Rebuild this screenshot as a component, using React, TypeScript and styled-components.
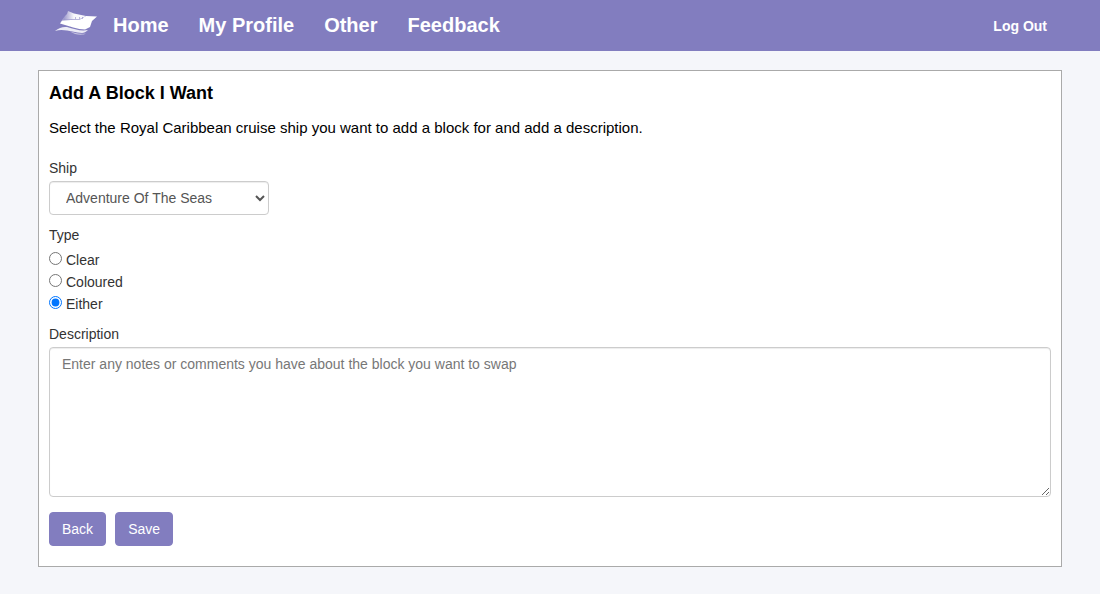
import React from "react";
import styled, { createGlobalStyle } from "styled-components";

const purple = "#827dbf";

const GlobalStyle = createGlobalStyle`
  html, body {
    margin: 0;
    padding: 0;
    background: #f5f6fa;
    font-family: "Liberation Sans", Arial, sans-serif;
  }
  * {
    box-sizing: border-box;
  }
`;

const Header = styled.header`
  height: 51px;
  background: ${purple};
  display: flex;
  align-items: center;
  padding: 0 53px 0 55px;
`;

const Logo = styled.svg`
  width: 42px;
  height: 24px;
  margin-right: 16px;
  margin-top: -5px;
`;

const Nav = styled.nav`
  display: flex;
  gap: 30px;
  flex: 1;
`;

const NavLink = styled.a`
  color: #fff;
  font-size: 20px;
  font-weight: 700;
  text-decoration: none;
`;

const LogOut = styled.a`
  color: #fff;
  font-size: 14px;
  font-weight: 700;
  text-decoration: none;
`;

const Main = styled.main`
  padding: 19px 38px 27px;
`;

const Card = styled.form`
  height: 497px;
  background: #fff;
  border: 1px solid #aaa;
  padding: 11px 10px 10px;
  display: flex;
  flex-direction: column;
`;

const Title = styled.h1`
  margin: 0;
  font-size: 18px;
  line-height: 22px;
  font-weight: 700;
  color: #000;
`;

const Intro = styled.p`
  margin: 14px 0 0;
  font-size: 15px;
  line-height: 20px;
  color: #000;
`;

const Label = styled.label`
  display: block;
  font-size: 14px;
  line-height: 20px;
  color: #333;
`;

const ShipField = styled.div`
  margin-top: 20px;
`;

const ShipSelect = styled.select`
  display: block;
  width: 220px;
  height: 34px;
  margin-top: 3px;
  padding: 0 12px;
  background: #fff;
  border: 1px solid #ccc;
  border-radius: 4px;
  box-shadow: inset 0 1px 1px rgba(0, 0, 0, 0.075);
  font-family: inherit;
  font-size: 14px;
  color: #555;
`;

const TypeField = styled.fieldset`
  margin: 10px 0 0;
  padding: 0;
  border: 0;
`;

const RadioList = styled.div`
  margin-top: 4px;
`;

const RadioRow = styled.label`
  display: flex;
  align-items: center;
  height: 22px;
  font-size: 14px;
  color: #333;

  input {
    width: 13px;
    height: 13px;
    margin: 0 4px 3px 0;
  }
`;

const DescriptionField = styled.div`
  margin-top: 9px;
`;

const Description = styled.textarea`
  display: block;
  width: 100%;
  height: 150px;
  margin-top: 3px;
  padding: 6px 12px;
  border: 1px solid #ccc;
  border-radius: 4px;
  box-shadow: inset 0 1px 1px rgba(0, 0, 0, 0.075);
  font-family: inherit;
  font-size: 14px;
  line-height: 20px;
  color: #555;

  &::placeholder {
    color: #777;
    opacity: 1;
  }
`;

const Actions = styled.div`
  display: flex;
  gap: 9px;
  margin-top: 15px;
`;

const Button = styled.button`
  height: 34px;
  padding: 0 12px;
  background: ${purple};
  border: 1px solid ${purple};
  border-radius: 4px;
  color: #fff;
  font-family: inherit;
  font-size: 14px;
`;

const navItems = ["Home", "My Profile", "Other", "Feedback"];

const App: React.FC = () => {
  return (
    <>
      <GlobalStyle />
      <Header>
        <Logo viewBox="0 0 42 24" aria-hidden="true">
          <defs>
            <linearGradient id="shipFade" x1="0" x2="1" y1="0" y2="0">
              <stop offset="0.1" stopColor="#fff" stopOpacity="0.25" />
              <stop offset="0.5" stopColor="#fff" stopOpacity="0.95" />
            </linearGradient>
          </defs>
          {/* superstructure */}
          <path
            d="M13 0 L19 2.5 L31 5 L25 8 L7 9 L10 5 L12 3 Z"
            fill="url(#shipFade)"
          />
          {/* hull */}
          <path
            d="M7 9.5 L25 8.5 L31 5 L42 5.5 L37 10 L35 16 L30 18.5 C23 18.5 14 15 5 12.5 Z"
            fill="#fff"
          />
          {/* waves */}
          <path
            d="M0 20 C4 16.5 8 15.5 12 16 C19 18 26 20.5 33 19 C31 21 29 22 27 22 C20 22 9 17 0 20 Z"
            fill="#fff"
            opacity="0.85"
          />
          <path
            d="M15 20.5 C20 22 24 23.5 31 22.5 C29 24 24 24 20 23 Z"
            fill="#fff"
            opacity="0.55"
          />
          <path d="M20 7h1M24 7h1M27 7h1" stroke="#827dbf" strokeWidth="1" />
        </Logo>
        <Nav>
          {navItems.map((item) => (
            <NavLink key={item} href="#">
              {item}
            </NavLink>
          ))}
        </Nav>
        <LogOut href="#">Log Out</LogOut>
      </Header>
      <Main>
        <Card>
          <Title>Add A Block I Want</Title>
          <Intro>
            Select the Royal Caribbean cruise ship you want to add a block for
            and add a description.
          </Intro>
          <ShipField>
            <Label htmlFor="ship">Ship</Label>
            <ShipSelect id="ship" defaultValue="Adventure Of The Seas">
              <option>Adventure Of The Seas</option>
            </ShipSelect>
          </ShipField>
          <TypeField>
            <Label as="div">Type</Label>
            <RadioList>
              <RadioRow>
                <input type="radio" name="type" />
                Clear
              </RadioRow>
              <RadioRow>
                <input type="radio" name="type" />
                Coloured
              </RadioRow>
              <RadioRow>
                <input type="radio" name="type" defaultChecked />
                Either
              </RadioRow>
            </RadioList>
          </TypeField>
          <DescriptionField>
            <Label htmlFor="description">Description</Label>
            <Description
              id="description"
              placeholder="Enter any notes or comments you have about the block you want to swap"
            />
          </DescriptionField>
          <Actions>
            <Button type="button">Back</Button>
            <Button type="button">Save</Button>
          </Actions>
        </Card>
      </Main>
    </>
  );
};

export default App;
